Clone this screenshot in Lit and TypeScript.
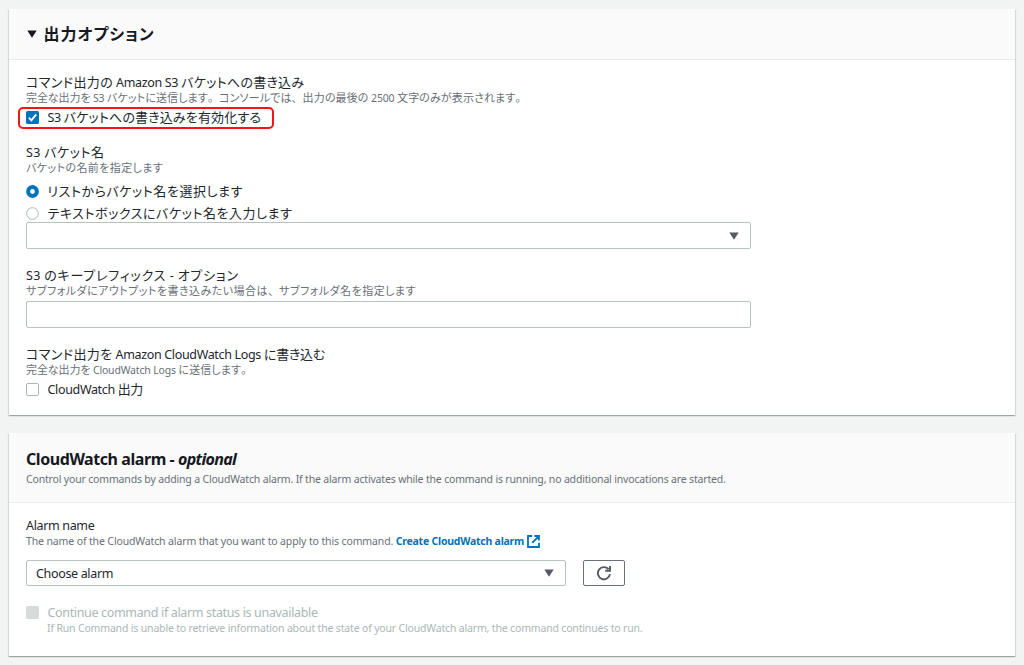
import { LitElement, html, css } from "lit";
import { customElement } from "lit/decorators.js";

const caret = html`<svg class="caret" width="10" height="8" viewBox="0 0 10 8"><path d="M0.3 0.5H9.7L5 7.8Z" fill="currentColor"/></svg>`;

// Splits a string into Latin, Japanese and punctuation runs so each can be spaced on its own.
const text = (s: string) =>
  (s.match(/[\x20-\x7e]+|[、。]|[^\x20-\x7e、。]+/g) ?? []).map((run) =>
    /^[\x20-\x7e]/.test(run) ? html`<span class="en">${run}</span>`
    : /[、。]/.test(run) ? html`<span class="pt">${run}</span>`
    : html`<span class="ja">${run}</span>`);

@customElement("app-root")
export class AppRoot extends LitElement {
  static styles = css`
    :host {
      display: block;
      box-sizing: border-box;
      height: 665px;
      padding: 9px 9px 0;
      background: #f2f3f3;
      color: #16191f;
      font-family: "Noto Sans", "Noto Sans CJK JP", sans-serif;
      font-size: 13px;
      overflow: hidden;
    }
    *, *::after { box-sizing: border-box; }
    .card {
      background: #fff;
      box-shadow: 0 1px 1px 0 rgba(0, 28, 36, 0.2), 1px 1px 1px 0 rgba(0, 28, 36, 0.1), -1px 1px 1px 0 rgba(0, 28, 36, 0.1);
    }
    .outputs { height: 406px; margin-bottom: 18px; }
    .alarm { height: 223px; }
    .head { background: #fafafa; border-bottom: 1px solid #eaeded; padding: 0 17px; }
    .outputs .head { height: 51px; display: flex; align-items: center; gap: 7px; padding: 0 18px 1px 17.5px; margin-bottom: 1px; }
    .alarm .head { height: 70px; padding-top: 16px; }
    h2 { margin: 0; font-size: 16px; line-height: 20px; font-weight: 700; white-space: pre; }
    h2 .ja { letter-spacing: 0.95px; }
    h2 .en { letter-spacing: -0.43px; }
    h2 i .en { letter-spacing: -0.68px; }
    .body { padding: 13px 17px 0; }
    .alarm .body { padding-top: 14px; }
    .label, .desc { display: block; height: 16px; line-height: 16px; width: max-content; white-space: pre; }
    .label { color: #23272e; }
    .label .en { font-size: 12.5px; letter-spacing: -0.34px; }
    .desc { font-size: 11px; color: #687078; }
    .desc .en { font-size: 10.5px; letter-spacing: -0.17px; }
    .ja { font-feature-settings: "palt"; letter-spacing: 0.55px; }
    .t1 .ja:first-child { letter-spacing: 0.4px; }
    .t1 .ja:last-child { letter-spacing: 0.28px; }
    .t2 .ja { letter-spacing: 0.13px; }
    .t2 .ja:first-child { letter-spacing: -0.1px; }
    .t3 .ja { letter-spacing: 0.15px; }
    .t4 .en { letter-spacing: 0.3px; }
    .t5 .ja { letter-spacing: 0.4px; }
    .t8 .en { letter-spacing: 0.3px; }
    .t8 .ja { letter-spacing: 0.8px; }
    .t9 .ja { letter-spacing: 0.48px; }
    .t10 .ja { letter-spacing: 0.4px; }
    .t10 .ja:last-child { letter-spacing: -0.2px; }
    .t12 .ja { letter-spacing: -0.6px; }
    .t16 .en { letter-spacing: -0.13px; }
    .group { margin-bottom: 18px; }
    .choice { display: flex; align-items: center; gap: 8.5px; height: 18px; position: relative; }
    .enable { height: 22px; margin-bottom: 16px; }
    .enable::after { content: ""; position: absolute; left: -8px; top: 1px; width: 256px; height: 22px; border: 2px solid #f81414; border-radius: 5px; }
    .radio { margin-top: 4px; }
    .first { margin-top: 6px; }
    .field { display: flex; align-items: center; justify-content: space-between; height: 27px; width: 725px; border: 1px solid #b6c1c1; border-radius: 2px; padding: 0 11px 0 9px; background: #fff; }
    .select { justify-content: flex-end; }
    .prefix { margin-top: 2px; }
    .caret { color: #545b64; display: block; }
    .ctl { width: 13px; height: 13px; display: block; flex: none; }
    .logs { margin-top: 2px; }
    .about { margin-top: 2px; }
    .row { display: flex; gap: 17px; margin-top: 11px; }
    .row .field { width: 540px; height: 26px; }
    .btn { width: 42px; height: 26px; padding: 0; border: 1px solid #687078; border-radius: 2px; background: #fff; display: flex; align-items: center; justify-content: center; }
    .link { color: #0073bb; font-weight: 700; text-decoration: none; }
    .desc .link .en { letter-spacing: -0.23px; }
    .linkrow { display: flex; align-items: center; }
    .ext { margin-left: 3px; display: block; }
    .off { margin-top: 17px; }
    .off .label, .offdesc { color: #aab7b8; }
    .offdesc { margin-left: 21px; margin-top: -1px; }
  `;
  render() {
    return html`
      <section class="card outputs">
        <div class="head">
          <svg width="10" height="8" viewBox="0 0 10 8"><path d="M0.3 0.5H9.7L5 7.8Z" fill="#16191f"/></svg>
          <h2>${text("出力オプション")}</h2>
        </div>
        <div class="body">
          <span class="label t1">${text("コマンド出力の Amazon S3 バケットへの書き込み")}</span>
          <span class="desc t2">${text("完全な出力を S3 バケットに送信します。コンソールでは、出力の最後の 2500 文字のみが表示されます。")}</span>
          <div class="choice enable">
            <svg class="ctl" viewBox="0 0 13 13"><rect width="13" height="13" rx="1.5" fill="#0073bb"/><path d="M2.8 6.6L5.4 9.3L10.2 3.4" fill="none" stroke="#fff" stroke-width="1.8"/></svg>
            <span class="label t3">${text("S3 バケットへの書き込みを有効化する")}</span>
          </div>
          <span class="label t4">${text("S3 バケット名")}</span>
          <span class="desc t5">${text("バケットの名前を指定します")}</span>
          <div class="choice radio first">
            <svg class="ctl" viewBox="0 0 13 13"><circle cx="6.5" cy="6.5" r="4.4" fill="#fff" stroke="#0073bb" stroke-width="4"/></svg>
            <span class="label">${text("リストからバケット名を選択します")}</span>
          </div>
          <div class="choice radio">
            <svg class="ctl" viewBox="0 0 13 13"><circle cx="6.5" cy="6.5" r="5.8" fill="#fff" stroke="#aab7b8"/></svg>
            <span class="label">${text("テキストボックスにバケット名を入力します")}</span>
          </div>
          <div class="field select group">${caret}</div>
          <span class="label t8">${text("S3 のキープレフィックス - オプション")}</span>
          <span class="desc t9">${text("サブフォルダにアウトプットを書き込みたい場合は、サブフォルダ名を指定します")}</span>
          <div class="field prefix group"></div>
          <span class="label t10">${text("コマンド出力を Amazon CloudWatch Logs に書き込む")}</span>
          <span class="desc t2">${text("完全な出力を CloudWatch Logs に送信します。")}</span>
          <div class="choice logs">
            <svg class="ctl" viewBox="0 0 13 13"><rect x="0.5" y="0.5" width="12" height="12" rx="1.5" fill="#fff" stroke="#aab7b8"/></svg>
            <span class="label t12">${text("CloudWatch 出力")}</span>
          </div>
        </div>
      </section>
      <section class="card alarm">
        <div class="head">
          <h2>${text("CloudWatch alarm - ")}<i>${text("optional")}</i></h2>
          <span class="desc about">${text("Control your commands by adding a CloudWatch alarm. If the alarm activates while the command is running, no additional invocations are started.")}</span>
        </div>
        <div class="body">
          <span class="label">${text("Alarm name")}</span>
          <div class="linkrow">
            <span class="desc t16">${text("The name of the CloudWatch alarm that you want to apply to this command. ")}<a class="link">${text("Create CloudWatch alarm")}</a></span>
            <svg class="ext" width="13" height="13" viewBox="0 0 13 13" fill="none" stroke="#0073bb" stroke-width="1.8"><path d="M5.2 1H1V12H12V7.8M7.4 1H12V5.6M12 1L5.2 7.8"/></svg>
          </div>
          <div class="row">
            <div class="field"><span class="label">${text("Choose alarm")}</span>${caret}</div>
            <button class="btn" aria-label="Refresh"><svg width="16" height="16" viewBox="0 0 16 16" fill="none" stroke="#545b64" stroke-width="1.9"><path d="M14 9.2A6.1 6.1 0 1 1 12.6 4.2M14 1V5.8H9.2"/></svg></button>
          </div>
          <div class="choice off">
            <svg class="ctl" viewBox="0 0 13 13"><rect width="13" height="13" rx="1.5" fill="#d5dbdb"/></svg>
            <span class="label">${text("Continue command if alarm status is unavailable")}</span>
          </div>
          <span class="desc offdesc">${text("If Run Command is unable to retrieve information about the state of your CloudWatch alarm, the command continues to run.")}</span>
        </div>
      </section>`;
  }
}
